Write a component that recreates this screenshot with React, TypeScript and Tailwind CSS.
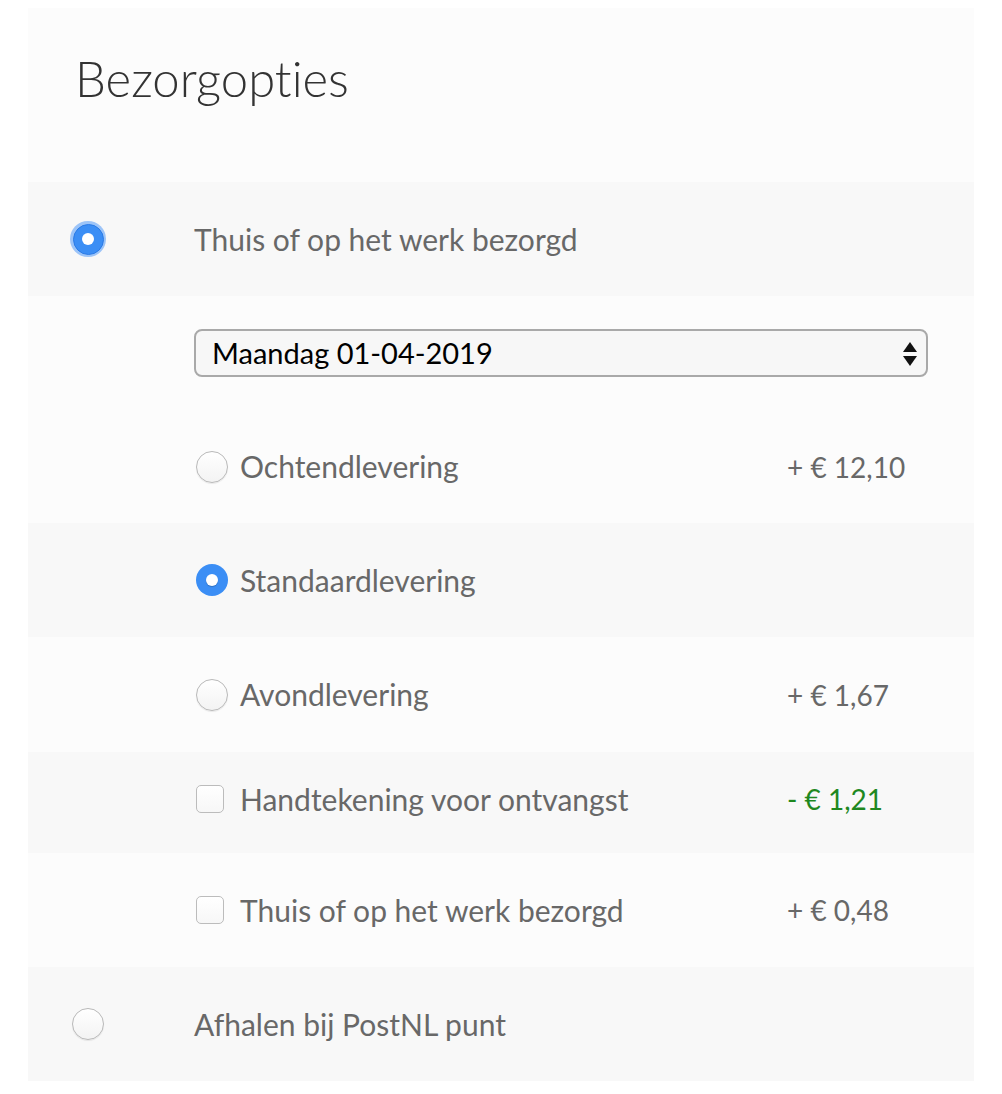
import React from "react";

const font = { fontFamily: "Lato, 'Open Sans', sans-serif" };

function BigRadio({ checked }: { checked: boolean }) {
  if (checked) {
    return (
      <div className="w-[36px] h-[36px] rounded-full bg-[#9cc4f8] flex items-center justify-center">
        <div className="w-[31px] h-[31px] rounded-full bg-[#3b8ef5] border border-[#2b7be6] flex items-center justify-center">
          <div className="w-[12px] h-[12px] rounded-full bg-white" />
        </div>
      </div>
    );
  }
  return (
    <div className="w-[32px] h-[32px] rounded-full border border-[#b9b9b9] bg-gradient-to-b from-white to-[#f3f3f3] shadow-[0_1px_1px_rgba(0,0,0,0.08)]" />
  );
}

function SmallRadio({ checked }: { checked: boolean }) {
  if (checked) {
    return (
      <div className="w-[32px] h-[32px] rounded-full bg-[#3b8ef5] flex items-center justify-center">
        <div className="w-[12px] h-[12px] rounded-full bg-white shadow-[0_1px_1px_rgba(0,0,0,0.2)]" />
      </div>
    );
  }
  return (
    <div className="w-[32px] h-[32px] rounded-full border border-[#b9b9b9] bg-gradient-to-b from-white to-[#f3f3f3] shadow-[0_1px_1px_rgba(0,0,0,0.08)]" />
  );
}

function Checkbox() {
  return (
    <div className="w-[28px] h-[28px] rounded-[5px] border border-[#bcbcbc] bg-gradient-to-b from-white to-[#f7f7f7]" />
  );
}

function SubRow({
  control,
  label,
  price,
  green,
  dark,
  h,
}: {
  control: React.ReactNode;
  label: string;
  price?: string;
  green?: boolean;
  dark?: boolean;
  h: string;
}) {
  return (
    <div className={`flex items-center pl-[168px] ${h} ${dark ? "bg-[#f8f8f8]" : ""}`}>
      <div className="w-[44px] flex items-center">{control}</div>
      <div className="flex-1 text-[30px] text-[#686868]">{label}</div>
      <div className={`w-[187px] text-[28px] ${green ? "text-[#1f881f]" : "text-[#686868]"}`}>{price ?? ""}</div>
    </div>
  );
}

export default function App() {
  return (
    <div className="min-h-screen bg-white pt-[8px] pl-[28px] [font-variant-ligatures:none]" style={font}>
      <div className="w-[946px] bg-[#fcfcfc]">
        <div className="h-[174px] pl-[47px] pt-[38px]">
          <h2 className="text-[49px] font-light leading-[64px] text-[#333333]">Bezorgopties</h2>
        </div>

        <div className="h-[114px] bg-[#f8f8f8] flex items-center">
          <div className="w-[166px] pl-[42px] flex items-center">
            <BigRadio checked />
          </div>
          <div className="text-[30px] text-[#686868]">Thuis of op het werk bezorgd</div>
        </div>

        <div className="h-[114px] flex items-center pl-[166px]">
          <div className="relative w-[734px] h-[48px] rounded-[8px] border-2 border-[#a9a9a9] bg-[#f7f7f7] flex items-center pl-[16px]">
            <span className="text-[29px] text-black">Maandag 01-04-2019</span>
            <svg className="absolute right-[8px] top-[10px]" width="16" height="26" viewBox="0 0 16 26">
              <polygon points="8,1 15,11 1,11" fill="#111" />
              <polygon points="1,15 15,15 8,25" fill="#111" />
            </svg>
          </div>
        </div>

        <SubRow h="h-[113px]" control={<SmallRadio checked={false} />} label="Ochtendlevering" price="+ € 12,10" />
        <SubRow h="h-[114px]" dark control={<SmallRadio checked />} label="Standaardlevering" />
        <SubRow h="h-[115px]" control={<SmallRadio checked={false} />} label="Avondlevering" price="+ € 1,67" />
        <SubRow h="h-[101px] pb-[7px]" dark control={<Checkbox />} label="Handtekening voor ontvangst" price="- € 1,21" green />
        <SubRow h="h-[114px]" control={<Checkbox />} label="Thuis of op het werk bezorgd" price="+ € 0,48" />

        <div className="h-[114px] bg-[#f8f8f8] flex items-center">
          <div className="w-[166px] pl-[44px] flex items-center">
            <BigRadio checked={false} />
          </div>
          <div className="text-[30px] text-[#686868]">Afhalen bij PostNL punt</div>
        </div>
      </div>
    </div>
  );
}
